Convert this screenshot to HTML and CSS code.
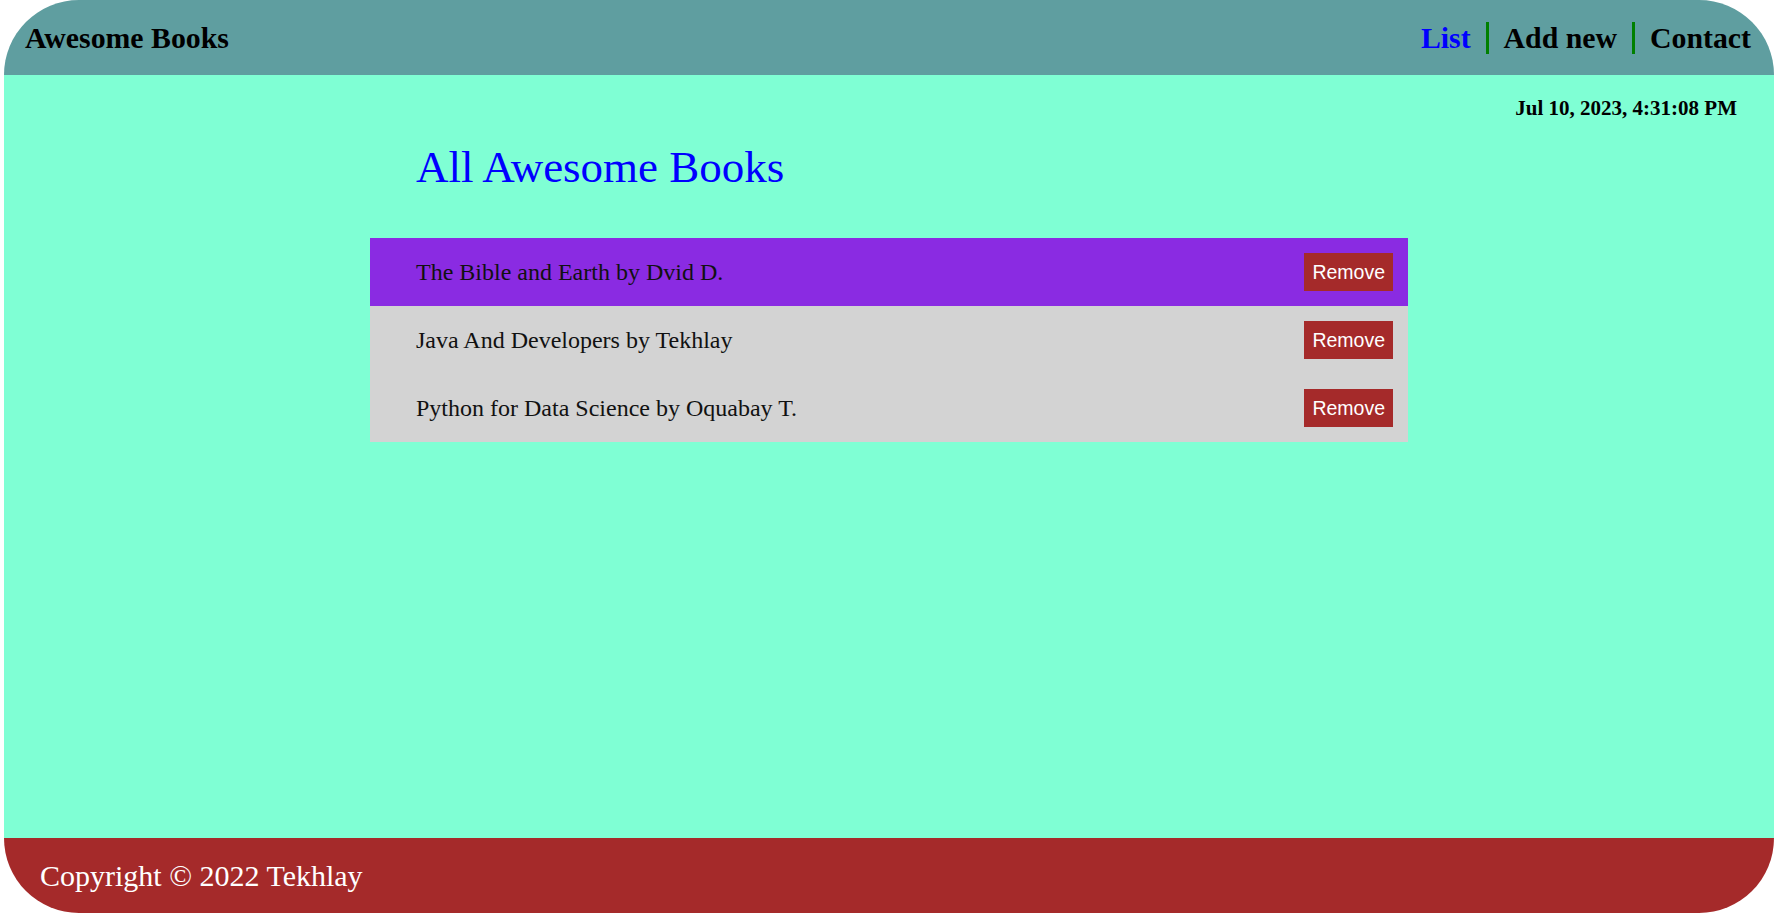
FILE: index.html
```html
<!DOCTYPE html>
<html lang="en">
<head>
<meta charset="utf-8">
<title>Awesome Books</title>
<link rel="stylesheet" href="styles.css">
</head>
<body>
  <header class="topbar">
    <h2 class="brand">Awesome Books</h2>
    <ul class="nav">
      <li class="nav-item active">List</li>
      <li class="nav-item">Add new</li>
      <li class="nav-item">Contact</li>
    </ul>
  </header>
  <main class="content">
    <p class="date">Jul 10, 2023, 4:31:08 PM</p>
    <section class="books">
      <h1 class="title">All Awesome Books</h1>
      <ul class="book-list">
        <li class="book odd"><span class="book-name">The Bible and Earth by Dvid D.</span><button class="remove">Remove</button></li>
        <li class="book"><span class="book-name">Java And Developers by Tekhlay</span><button class="remove">Remove</button></li>
        <li class="book"><span class="book-name">Python for Data Science by Oquabay T.</span><button class="remove">Remove</button></li>
      </ul>
    </section>
  </main>
  <footer class="footer">
    <p class="copy">Copyright © 2022 Tekhlay</p>
  </footer>
</body>
</html>
```
FILE: styles.css
```css
html, body {
  height: 100%;
}
body {
  margin: 0 4px;
  background: #fff;
  font-family: "Liberation Serif", "Times New Roman", serif;
  display: flex;
  flex-direction: column;
  min-height: 100vh;
}
.topbar {
  height: 75px;
  flex: 0 0 75px;
  background: #5f9ea0;
  border-radius: 80px 80px 0 0;
  display: flex;
  align-items: center;
  justify-content: space-between;
  padding: 0 23px 0 21px;
}
.brand {
  margin: 0;
  font-size: 29.8px;
  font-weight: bold;
  color: #000;
}
.nav {
  list-style: none;
  margin: 0;
  padding: 0;
  display: flex;
  align-items: center;
}
.nav-item {
  font-size: 29.8px;
  font-weight: bold;
  color: #000;
  padding: 0 15px;
  line-height: 32px;
  border-left: 3px solid #008000;
}
.nav-item:first-child {
  border-left: none;
}
.nav-item:last-child {
  padding-right: 0;
}
.nav-item.active {
  color: #0000ff;
}
.content {
  flex: 1;
  background: #7fffd4;
  padding-top: 21px;
}
.date {
  margin: 0;
  text-align: right;
  font-size: 21px;
  font-weight: bold;
  line-height: 24px;
  padding-right: 37px;
}
.books {
  width: 1038px;
  margin: 22px auto 0;
}
.title {
  margin: 0;
  padding-left: 46px;
  font-size: 45px;
  font-weight: normal;
  line-height: 50px;
  color: #0000ff;
}
.book-list {
  list-style: none;
  margin: 46px 0 0;
  padding: 0;
}
.book {
  height: 68px;
  display: flex;
  align-items: center;
  justify-content: space-between;
  padding: 0 15px 0 46px;
  background: #d3d3d3;
  font-size: 24px;
  color: #111;
}
.book.odd {
  background: #8a2be2;
}
.remove {
  height: 38px;
  padding: 0 8px;
  border: none;
  background: #a52a2a;
  color: #fff;
  font-family: "Liberation Sans", Arial, sans-serif;
  font-size: 19.5px;
}
.footer {
  height: 75px;
  flex: 0 0 75px;
  background: #a52a2a;
  border-radius: 0 0 80px 80px;
  display: flex;
  align-items: center;
  padding-left: 36px;
}
.copy {
  margin: 0;
  color: #fff;
  font-size: 30px;
}
```
